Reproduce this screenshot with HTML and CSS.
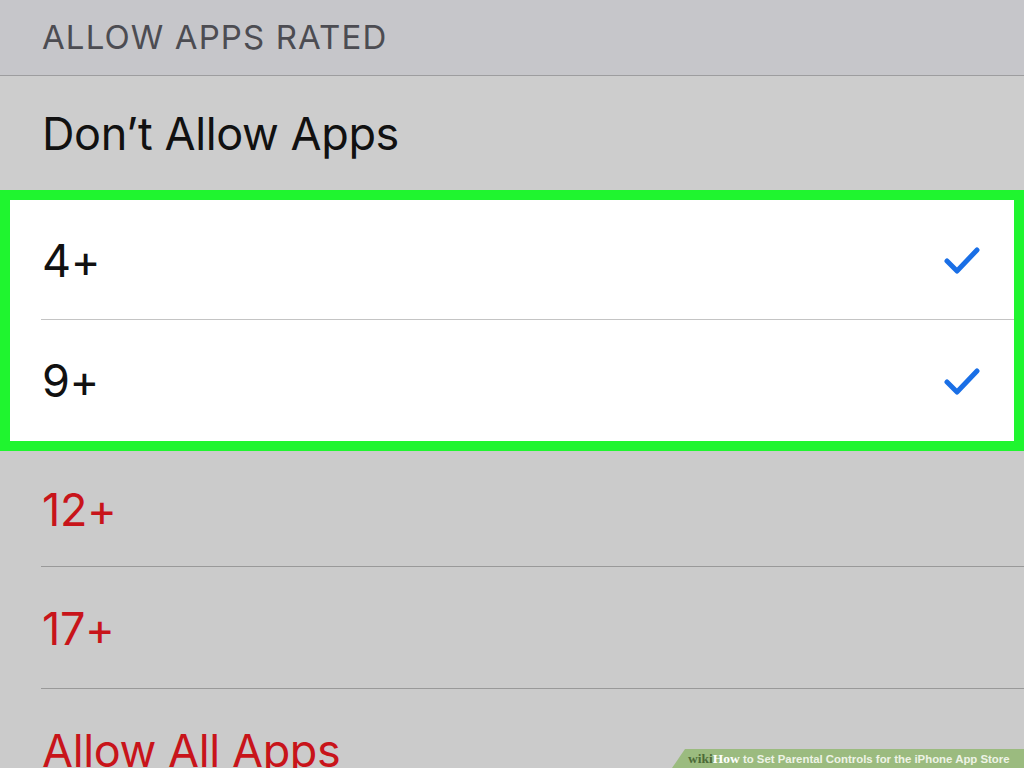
FILE: index.html
```html
<!DOCTYPE html>
<html lang="en">
<head>
  <meta charset="UTF-8">
  <title>Allow Apps Rated</title>
  <link rel="stylesheet" href="styles.css">
</head>
<body>
  <div class="screen">
    <div class="section-header">ALLOW APPS RATED</div>

    <div class="row row-top">
      <span class="label">Don’t Allow Apps</span>
    </div>

    <div class="highlight">
      <div class="row row-white">
        <span class="label">4+</span>
        <svg class="check" viewBox="0 0 36 30" width="36" height="30">
          <path d="M3 16 L13 26 L33 5" fill="none" stroke="#1a6fe6" stroke-width="5" stroke-linecap="round" stroke-linejoin="round"/>
        </svg>
      </div>
      <div class="row row-white">
        <span class="label">9+</span>
        <svg class="check" viewBox="0 0 36 30" width="36" height="30">
          <path d="M3 16 L13 26 L33 5" fill="none" stroke="#1a6fe6" stroke-width="5" stroke-linecap="round" stroke-linejoin="round"/>
        </svg>
      </div>
    </div>

    <div class="row row-gray">
      <span class="label red">12+</span>
    </div>
    <div class="row row-gray">
      <span class="label red">17+</span>
    </div>
    <div class="row row-gray">
      <span class="label red">Allow All Apps</span>
    </div>
  </div>

  <div class="badge"><b class="wiki">wiki</b><b class="how">How</b> to Set Parental Controls for the iPhone App Store</div>
</body>
</html>
```

FILE: styles.css
```css
body {
  margin: 0;
  background: #cbcbcb;
  font-family: Inter, "Open Sans", sans-serif;
  overflow: hidden;
}
.screen {
  width: 1024px;
  height: 768px;
  overflow: hidden;
}
.section-header {
  height: 76px;
  box-sizing: border-box;
  padding: 17px 0 0 42px;
  background: #c6c6ca;
  border-bottom: 1px solid #9d9d9f;
  color: #4c4c52;
  font-size: 33px;
  letter-spacing: 1.1px;
}
.row {
  display: flex;
  align-items: center;
  justify-content: space-between;
  padding: 0 44px 0 42px;
  box-sizing: border-box;
  position: relative;
}
.row-top {
  height: 114px;
  background: #cdcdcd;
}
.label {
  font-size: 45px;
  color: #111;
  letter-spacing: -0.4px;
}
.red {
  color: #c8141a;
}
.highlight {
  border: 10px solid #1ff52f;
  background: #fff;
}
.row-white {
  height: 120px;
  padding: 0 34px 0 32px;
}
.row-white + .row-white {
  height: 121px;
}
.row-white:first-child::after,
.row-gray::after {
  content: "";
  position: absolute;
  left: 41px;
  right: 0;
  bottom: 0;
  height: 1px;
  background: #999;
}
.row-white:first-child::after {
  left: 31px;
  background: #c4c4c4;
}
.row-gray {
  height: 122px;
  background: #cbcbcb;
}
.highlight + .row-gray {
  height: 116px;
}
.row-gray:last-child::after {
  display: none;
}
.check {
  display: block;
}
.badge {
  position: absolute;
  right: 0;
  bottom: 0;
  width: 352px;
  height: 19px;
  box-sizing: border-box;
  padding-left: 16px;
  background: #9bbb7f;
  clip-path: polygon(13px 0, 100% 0, 100% 100%, 0 100%);
  color: #eef3e6;
  font-family: "Liberation Sans", Arial, sans-serif;
  font-weight: bold;
  font-size: 11.4px;
  line-height: 19px;
  white-space: nowrap;
}
.wiki {
  font-family: "Liberation Serif", serif;
  color: #4d6a38;
  font-size: 13.5px;
}
.how {
  font-family: "Liberation Serif", serif;
  color: #fff;
  font-size: 13.5px;
}
```
